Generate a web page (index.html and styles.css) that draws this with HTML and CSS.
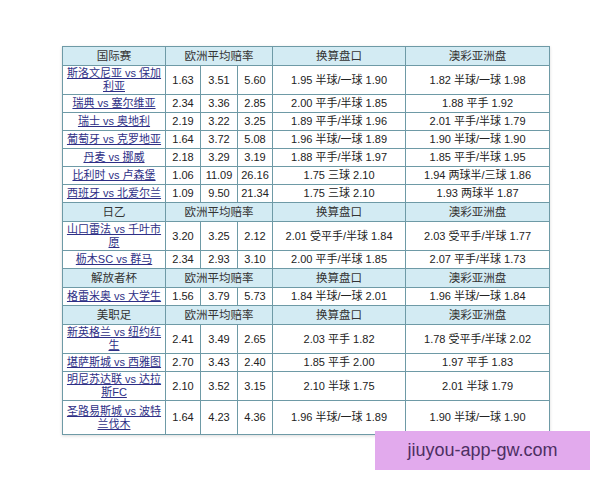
FILE: index.html
```html
<!DOCTYPE html>
<html lang="zh">
<head>
<meta charset="utf-8">
<link rel="stylesheet" href="styles.css">
</head>
<body>
<div class="page">
<table class="odds">
<colgroup><col class="c-team"><col class="c-o1"><col class="c-o2"><col class="c-o3"><col class="c-hs"><col class="c-am"></colgroup>
<tr class="hd"><td>国际赛</td><td colspan="3">欧洲平均赔率</td><td>换算盘口</td><td>澳彩亚洲盘</td></tr>
<tr class="r2"><td class="team"><a>斯洛文尼亚 vs 保加利亚</a></td><td>1.63</td><td>3.51</td><td>5.60</td><td>1.95 半球/一球 1.90</td><td>1.82 半球/一球 1.98</td></tr>
<tr class="r"><td class="team"><a>瑞典 vs 塞尔维亚</a></td><td>2.34</td><td>3.36</td><td>2.85</td><td>2.00 平手/半球 1.85</td><td>1.88 平手 1.92</td></tr>
<tr class="r"><td class="team"><a>瑞士 vs 奥地利</a></td><td>2.19</td><td>3.22</td><td>3.25</td><td>1.89 平手/半球 1.96</td><td>2.01 平手/半球 1.79</td></tr>
<tr class="r"><td class="team"><a>葡萄牙 vs 克罗地亚</a></td><td>1.64</td><td>3.72</td><td>5.08</td><td>1.96 半球/一球 1.89</td><td>1.90 半球/一球 1.90</td></tr>
<tr class="r"><td class="team"><a>丹麦 vs 挪威</a></td><td>2.18</td><td>3.29</td><td>3.19</td><td>1.88 平手/半球 1.97</td><td>1.85 平手/半球 1.95</td></tr>
<tr class="r"><td class="team"><a>比利时 vs 卢森堡</a></td><td>1.06</td><td>11.09</td><td>26.16</td><td>1.75 三球 2.10</td><td>1.94 两球半/三球 1.86</td></tr>
<tr class="r"><td class="team"><a>西班牙 vs 北爱尔兰</a></td><td>1.09</td><td>9.50</td><td>21.34</td><td>1.75 三球 2.10</td><td>1.93 两球半 1.87</td></tr>
<tr class="hd"><td>日乙</td><td colspan="3">欧洲平均赔率</td><td>换算盘口</td><td>澳彩亚洲盘</td></tr>
<tr class="r2"><td class="team"><a>山口雷法 vs 千叶市原</a></td><td>3.20</td><td>3.25</td><td>2.12</td><td>2.01 受平手/半球 1.84</td><td>2.03 受平手/半球 1.77</td></tr>
<tr class="r"><td class="team"><a>枥木SC vs 群马</a></td><td>2.34</td><td>2.93</td><td>3.10</td><td>2.00 平手/半球 1.85</td><td>2.07 平手/半球 1.73</td></tr>
<tr class="hd"><td>解放者杯</td><td colspan="3">欧洲平均赔率</td><td>换算盘口</td><td>澳彩亚洲盘</td></tr>
<tr class="r"><td class="team"><a>格雷米奥 vs 大学生</a></td><td>1.56</td><td>3.79</td><td>5.73</td><td>1.84 半球/一球 2.01</td><td>1.96 半球/一球 1.84</td></tr>
<tr class="hd"><td>美职足</td><td colspan="3">欧洲平均赔率</td><td>换算盘口</td><td>澳彩亚洲盘</td></tr>
<tr class="r2"><td class="team"><a>新英格兰 vs 纽约红生</a></td><td>2.41</td><td>3.49</td><td>2.65</td><td>2.03 平手 1.82</td><td>1.78 受平手/半球 2.02</td></tr>
<tr class="r"><td class="team"><a>堪萨斯城 vs 西雅图</a></td><td>2.70</td><td>3.43</td><td>2.40</td><td>1.85 平手 2.00</td><td>1.97 平手 1.83</td></tr>
<tr class="r2"><td class="team"><a>明尼苏达联 vs 达拉斯FC</a></td><td>2.10</td><td>3.52</td><td>3.15</td><td>2.10 半球 1.75</td><td>2.01 半球 1.79</td></tr>
<tr class="r3"><td class="team"><a>圣路易斯城 vs 波特兰伐木</a></td><td>1.64</td><td>4.23</td><td>4.36</td><td>1.96 半球/一球 1.89</td><td>1.90 半球/一球 1.90</td></tr>
</table>
<div class="watermark">jiuyou-app-gw.com</div>
</div>
</body>
</html>
```

FILE: styles.css
```css
html, body {
  margin: 0;
  padding: 0;
  background: #ffffff;
}
.page {
  position: relative;
  width: 600px;
  height: 480px;
  padding: 46px 0 0 62px;
  box-sizing: border-box;
  font-family: "Liberation Sans", "Noto Sans CJK SC", sans-serif;
  font-size: 11px;
  color: #222;
}
.odds {
  border-collapse: collapse;
  table-layout: fixed;
  width: 487px;
  border: 1px solid #5f8d99;
  box-shadow: 0 1px 3px rgba(0,0,0,0.15);
}
.c-team { width: 103px; }
.c-o1 { width: 35px; }
.c-o2 { width: 37px; }
.c-o3 { width: 35px; }
.c-hs { width: 133px; }
.c-am { width: 144px; }
.odds td {
  border: 1px solid #6e9aa6;
  text-align: center;
  vertical-align: middle;
  padding: 0 2px;
  line-height: 13px;
  white-space: normal;
  overflow: hidden;
}
.hd td {
  background: #d3ebf3;
  color: #333;
  font-size: 11.5px;
}
.hd { height: 19px; }
.r { height: 18px; }
.r2 { height: 29px; }
.r3 { height: 34px; }
.team a {
  color: #2e2f86;
  text-decoration: underline;
}
.watermark {
  position: absolute;
  left: 375px;
  top: 431px;
  width: 215px;
  height: 39px;
  background: #e2aaed;
  color: #4d2f63;
  font-family: "Liberation Sans", sans-serif;
  font-size: 18px;
  display: flex;
  align-items: center;
  justify-content: center;
}
```
